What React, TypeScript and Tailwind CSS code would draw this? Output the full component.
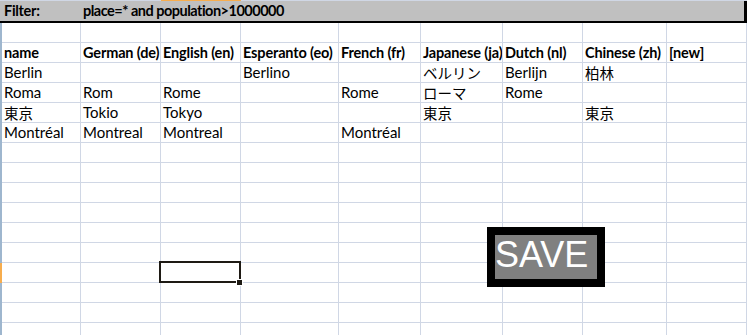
import React from "react";

const widths = [
  "w-[79px]",
  "w-[80px]",
  "w-[80px]",
  "w-[98px]",
  "w-[82px]",
  "w-[82px]",
  "w-[80px]",
  "w-[84px]",
  "w-[80px]",
];

const headers = [
  "name",
  "German (de)",
  "English (en)",
  "Esperanto (eo)",
  "French (fr)",
  "Japanese (ja)",
  "Dutch (nl)",
  "Chinese (zh)",
  "[new]",
];

const data: string[][] = [
  ["Berlin", "", "", "Berlino", "", "ベルリン", "Berlijn", "柏林", ""],
  ["Roma", "Rom", "Rome", "", "Rome", "ローマ", "Rome", "", ""],
  ["東京", "Tokio", "Tokyo", "", "", "東京", "", "東京", ""],
  ["Montréal", "Montreal", "Montreal", "", "Montréal", "", "", "", ""],
];

const cjk = /[\u3000-\u9fff]/;

function Row({
  cells,
  bold,
  selected,
}: {
  cells: string[];
  bold?: boolean;
  selected?: boolean;
}) {
  return (
    <div className="flex h-[20px] shrink-0">
      <div
        className={
          selected ? "w-[2px] shrink-0 bg-[#f7ad4e]" : "w-[2px] shrink-0 bg-[#9eb6ce]"
        }
      />
      {widths.map((w, i) => {
        const t = cells[i] ?? "";
        const isCjk = cjk.test(t);
        return (
          <div
            key={i}
            className={`${w} shrink-0 h-[20px] border-r border-b border-[#d0d7e5] overflow-hidden whitespace-nowrap pl-[2px]`}
          >
            <span
              className={
                isCjk
                  ? "block leading-[19px] text-[14.5px] text-black font-['Noto_Sans_CJK_JP',sans-serif]"
                  : bold
                  ? "block leading-[19px] text-[14.5px] tracking-[-0.15px] font-bold text-black font-['Lato',sans-serif]"
                  : "block leading-[19px] text-[15px] text-black font-['Lato',sans-serif]"
              }
            >
              {t}
            </span>
          </div>
        );
      })}
      <div className="flex-1 h-[20px]" />
    </div>
  );
}

export default function App() {
  const empty = Array(9).fill("");
  const rows: React.ReactNode[] = [];
  rows.push(<Row key="r0" cells={empty} />);
  rows.push(<Row key="h" cells={headers} bold />);
  data.forEach((d, i) => rows.push(<Row key={"d" + i} cells={d} />));
  for (let i = 6; i < 16; i++) {
    rows.push(<Row key={"e" + i} cells={empty} selected={i === 12} />);
  }

  return (
    <div className="relative w-[747px] h-[335px] overflow-hidden bg-white font-['Lato',sans-serif]">
      {/* top strip */}
      <div className="flex h-[1px]">
        <div className="w-[161px] bg-[#d0d7e5]" />
        <div className="w-[80px] bg-[#f7ad4e]" />
        <div className="flex-1 bg-[#d0d7e5]" />
      </div>
      {/* filter band */}
      <div className="flex h-[22px]">
        <div className="flex-1 flex flex-col">
          <div className="h-[20px] bg-[#c0c0c0] flex items-start">
            <span className="w-[83px] pl-[4px] leading-[19px] text-[14.5px] tracking-[-0.3px] font-bold text-black">
              Filter:
            </span>
            <span className="leading-[19px] text-[14.5px] tracking-[-0.5px] font-bold text-black whitespace-nowrap">
              place=* and population&gt;1000000
            </span>
          </div>
          <div className="h-[2px] bg-black" />
        </div>
        <div className="w-[3px] bg-black" />
      </div>
      {/* grid */}
      <div className="flex flex-col">{rows}</div>

      {/* selected cell */}
      <div className="absolute left-[159px] top-[261px] w-[82px] h-[22px] border-2 border-[#1e1a14]" />
      <div className="absolute left-[236px] top-[279px] w-[7px] h-[7px] bg-white flex items-center justify-center">
        <div className="w-[5px] h-[5px] bg-[#1e1a14]" />
      </div>

      {/* SAVE button */}
      <div className="absolute left-[487px] top-[227px] w-[118px] h-[60px] border-[8px] border-black bg-[#808080] flex items-start">
        <span className="text-white text-[36px] leading-[39px] font-['Liberation_Sans',Arial,sans-serif]">
          SAVE
        </span>
      </div>
    </div>
  );
}
